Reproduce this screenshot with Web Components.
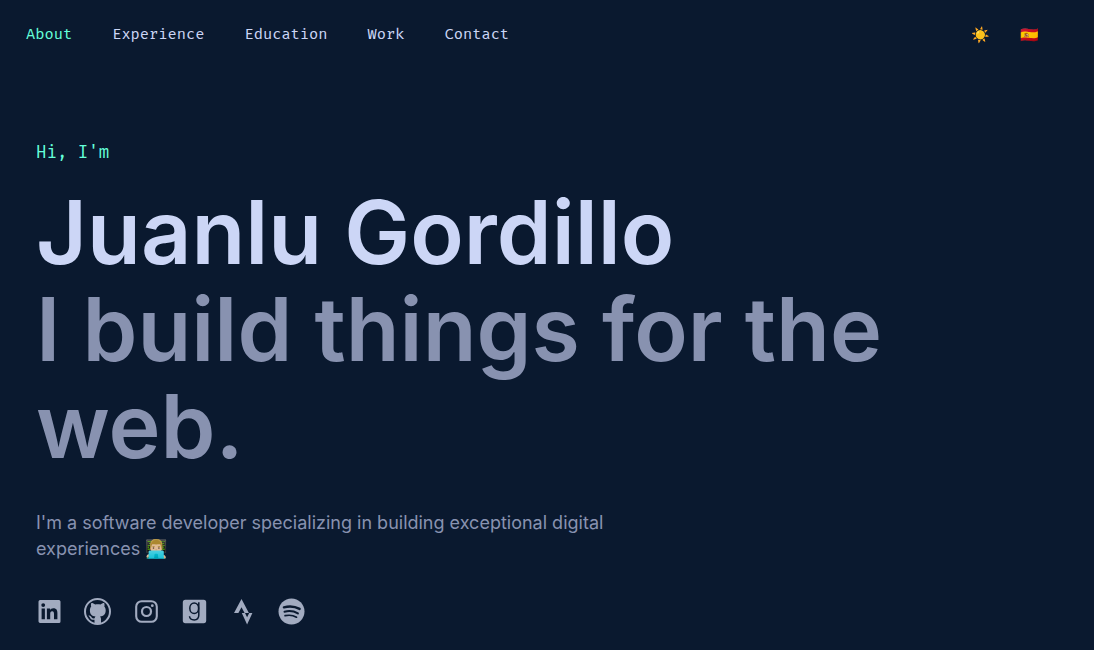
<!DOCTYPE html>
<html lang="en">
<head>
<meta charset="utf-8">
<meta name="viewport" content="width=device-width, initial-scale=1">
<title>Juanlu Gordillo</title>
<style>
body{margin:0;min-height:100vh;background:#0a192f;color:#8892b0;font-family:Inter,"Liberation Sans",sans-serif;--mono:"Fira Code","Fira Mono","Liberation Mono",monospace;--green:#64ffda;--light:#ccd6f6}
</style>
</head>
<body>
<site-header>
<nav-link href="#about" current>About</nav-link>
<nav-link href="#experience">Experience</nav-link>
<nav-link href="#education">Education</nav-link>
<nav-link href="#work">Work</nav-link>
<nav-link href="#contact">Contact</nav-link>
<icon-button slot="actions" label="Toggle theme">☀️</icon-button>
<icon-button slot="actions" label="Cambiar a español">🇪🇸</icon-button>
</site-header>
<hero-intro>
<span slot="greeting">Hi, I'm</span>
<span slot="name">Juanlu Gordillo</span>
<span slot="tagline">I build things for the web.</span>
<span slot="bio">I'm a software developer specializing in building exceptional digital experiences 👨🏼‍💻</span>
<social-link slot="social" name="LinkedIn"></social-link>
<social-link slot="social" name="GitHub"></social-link>
<social-link slot="social" name="Instagram"></social-link>
<social-link slot="social" name="Goodreads"></social-link>
<social-link slot="social" name="Strava"></social-link>
<social-link slot="social" name="Spotify"></social-link>
</hero-intro>
<script>
class SiteHeader extends HTMLElement{
constructor(){super();this.attachShadow({mode:'open'}).innerHTML=`<style>
:host{display:block}
header{display:flex;align-items:center;justify-content:space-between;padding:23px 55px 22px 26px}
nav{display:flex;gap:40px}
.actions{display:flex;gap:30px}
</style><header><nav aria-label="Main"><slot></slot></nav><div class="actions"><slot name="actions"></slot></div></header>`}
}
class NavLink extends HTMLElement{
constructor(){super();this.attachShadow({mode:'open'}).innerHTML=`<style>
:host{display:block}
a{display:block;color:var(--light);text-decoration:none;font:15px/24px var(--mono)}
:host([current]) a,a:hover{color:var(--green)}
</style><a><slot></slot></a>`;}
connectedCallback(){this.shadowRoot.querySelector('a').href=this.getAttribute('href')}
}
class IconButton extends HTMLElement{
constructor(){super();this.attachShadow({mode:'open'}).innerHTML=`<style>
:host{display:block}
button{display:block;padding:0;border:0;background:none;color:inherit;cursor:pointer;font:15px/24px Inter,"Noto Color Emoji",sans-serif}
</style><button type="button"><slot></slot></button>`}
connectedCallback(){this.shadowRoot.querySelector('button').setAttribute('aria-label',this.getAttribute('label'))}
}
class HeroIntro extends HTMLElement{
constructor(){super();this.attachShadow({mode:'open'}).innerHTML=`<style>
:host{display:block}
section{padding:72px 36px 24px}
.greeting{margin:0 0 19px;font:17px/24px var(--mono);color:var(--green)}
h1,h2{margin:0;font-size:88px;line-height:97px;font-weight:600}
h1{color:var(--light)}
h2{max-width:1000px}
.bio{margin:35px 0 0;max-width:580px;font-size:18px;line-height:26px}
.social{display:flex;justify-content:space-between;max-width:269px;margin-top:36px}
</style><section><p class="greeting"><slot name="greeting"></slot></p><h1><slot name="name"></slot></h1><h2><slot name="tagline"></slot></h2><p class="bio"><slot name="bio"></slot></p><div class="social"><slot name="social"></slot></div></section>`}
}
const icons={
LinkedIn:['0 0 27 27','<path fill-rule="evenodd" d="M4 2h19a2 2 0 0 1 1.500 1.500v20a1.500 1.500 0 0 1-1.500 1.500H4a2 2 0 0 1-1.500-1.500v-20A2 2 0 0 1 4 2zm1.600 8.500v10.800h3.300V10.500zM7.200 5.200a1.900 1.900 0 1 0 .01 3.800 1.900 1.900 0 0 0 0-3.800zM10.900 10.500v10.800h3.300v-5.400c0-1.400.4-2.700 2-2.700s1.800 1.500 1.800 2.800v5.300h3.400v-6c0-2.900-.7-5.100-4.100-5.100-1.600 0-2.700.9-3.100 1.700h-.1v-1.400z"/>'],
GitHub:['0 0 27 27','<circle cx="13.500" cy="13.500" r="12.500" fill="none" stroke="currentColor" stroke-width="2"/><path d="M10.500 25v-3.300c-2.800.4-3.900-.8-4.600-2.300-.4-.9-.9-1.200-1.500-1.700 1.700-.6 2.700.8 3.300 1.700.8 1 1.700 1.200 2.900.8.1-.8.500-1.400.9-1.800-3.600-.5-5.600-2.200-5.600-6 0-1.500.5-2.800 1.300-3.800-.4-1.100-.4-2.500.2-3.500 1.400 0 2.700.7 3.800 1.500 1.500-.4 3.700-.4 5.200 0 1-.8 2.400-1.500 3.700-1.500.5 1 .6 2.400.2 3.500.9 1 1.400 2.300 1.400 3.800 0 3.800-2.100 5.500-5.700 6 .7.7 1 1.500 1 2.700V25z"/>'],
Instagram:['0 0 27 27','<rect x="3.200" y="3.200" width="20.600" height="20.600" rx="5.500" fill="none" stroke="currentColor" stroke-width="2.100"/><circle cx="13.500" cy="13.500" r="4.500" fill="none" stroke="currentColor" stroke-width="2.200"/><circle cx="19.300" cy="7.700" r="1.400"/>'],
Goodreads:['0 0 27 27','<rect x="1.800" y="1.800" width="23.400" height="23.400" rx="2.600"/><g fill="none" stroke="#0a192f" stroke-width="1.500"><ellipse cx="13.200" cy="10.200" rx="4.400" ry="5.300"/><path d="M17.800 4.300v12.700c0 3.200-1.700 4.900-4.600 4.900-2.700 0-4.500-1.300-4.700-3.600"/></g>'],
Strava:['0 0 27 27','<path d="M11.500 1l7.400 14.100h-4.300l-3.100-5.900-3.100 5.900H4zM11.800 15.100H15l2.100 4.100 2.100-4.100h3.200L17.100 26.500z"/>'],
Spotify:['0 0 27 27','<circle cx="13.500" cy="13.500" r="13"/><g fill="none" stroke="#0a192f" stroke-linecap="round"><path d="M5.900 9.300c5.200-1.400 11-1 15.700 1.600" stroke-width="2.400"/><path d="M6.500 13.700c4.600-1.200 9.500-.6 13.400 1.700" stroke-width="2"/><path d="M7.100 17.700c4-.9 8-.5 11.400 1.500" stroke-width="1.700"/></g>']
};
class SocialLink extends HTMLElement{
constructor(){super();this.attachShadow({mode:'open'}).innerHTML=`<style>
:host{display:block}
a{display:block;color:#a2abc0}
a:hover{color:var(--green)}
svg{display:block;width:27px;height:27px;fill:currentColor}
</style><a href="#"><svg aria-hidden="true"></svg></a>`}
connectedCallback(){const name=this.getAttribute('name'),[box,art]=icons[name],a=this.shadowRoot.querySelector('a'),svg=a.firstElementChild;a.href='#'+name.toLowerCase();a.setAttribute('aria-label',name);svg.setAttribute('viewBox',box);svg.innerHTML=art}
}
customElements.define('site-header',SiteHeader);
customElements.define('nav-link',NavLink);
customElements.define('icon-button',IconButton);
customElements.define('hero-intro',HeroIntro);
customElements.define('social-link',SocialLink);
</script>
</body>
</html>
